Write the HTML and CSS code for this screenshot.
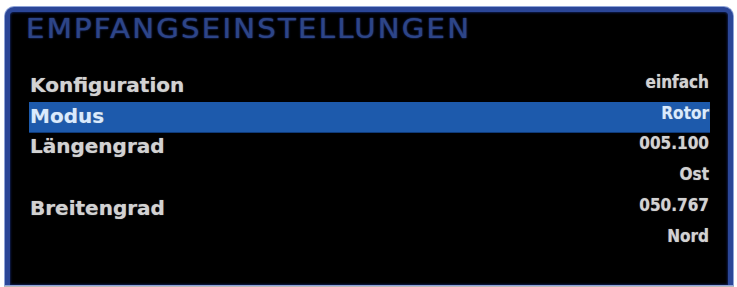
FILE: index.html
```html
<!DOCTYPE html>
<html lang="de">
<head>
<meta charset="utf-8">
<title>Empfangseinstellungen</title>
<link rel="stylesheet" href="styles.css">
</head>
<body>
<div class="panel">
  <h1 class="title"><span class="title-text">EMPFANGSEINSTELLUNGEN</span></h1>
  <ul class="list">
    <li class="row"><span class="label">Konfiguration</span><span class="value">einfach</span></li>
    <li class="row selected"><span class="label">Modus</span><span class="value">Rotor</span></li>
    <li class="row"><span class="label">Längengrad</span><span class="value">005.100</span></li>
    <li class="row"><span class="label"></span><span class="value">Ost</span></li>
    <li class="row"><span class="label">Breitengrad</span><span class="value">050.767</span></li>
    <li class="row"><span class="label"></span><span class="value">Nord</span></li>
  </ul>
</div>
</body>
</html>
```
FILE: styles.css
```css
html, body {
  margin: 0;
  padding: 0;
  background: #ffffff;
  width: 737px;
  height: 287px;
  overflow: hidden;
}

body {
  padding: 7px 0 0 5px;
  box-sizing: border-box;
}

.panel {
  width: 728px;
  height: 278px;
  box-sizing: border-box;
  background: #000000;
  border: 5px solid #2b4697;
  border-bottom: none;
  border-radius: 9px 9px 0 0;
  box-shadow: 0 0 0 1px #8ea3d8, inset 0 0 2px 1px #0d1a4a;
  padding: 2px 18px 0 19px;
  position: relative;
}

.panel::after {
  content: "";
  position: absolute;
  left: -6px;
  right: -6px;
  bottom: -2px;
  height: 1px;
  background: #b8b8b8;
}

.title {
  margin: 0 0 0 -3px;
  font-family: "DejaVu Sans", sans-serif;
  font-weight: normal;
  font-size: 26px;
  line-height: 30px;
  letter-spacing: 2px;
  color: #2d4588;
  text-shadow: 0 0 2px #1a2a66, 0 0 1px #2d4588;
}

.title-text {
  display: inline-block;
  transform: scaleX(1.12);
  transform-origin: left center;
}

.list {
  list-style: none;
  margin: 27px 0 0 0;
  padding: 0;
}

.row {
  display: flex;
  justify-content: space-between;
  align-items: center;
  height: 31px;
  box-sizing: border-box;
  padding: 0 1px 3px 1px;
}

.row.selected {
  height: 30px;
  background: #1d5aac;
  box-shadow: 0 1px 0 #0f3a78;
}

.label {
  font-family: "DejaVu Sans", sans-serif;
  font-weight: bold;
  font-size: 20px;
  color: #d2d2d2;
  text-shadow: 0 0 1px #808080;
}

.value {
  font-family: "DejaVu Sans Condensed", "DejaVu Sans", sans-serif;
  font-stretch: condensed;
  font-weight: bold;
  font-size: 17px;
  color: #d2d2d2;
  margin-top: -6px;
  text-shadow: 0 0 1px #808080;
}

.selected .label,
.selected .value {
  color: #d9ebff;
}
```
